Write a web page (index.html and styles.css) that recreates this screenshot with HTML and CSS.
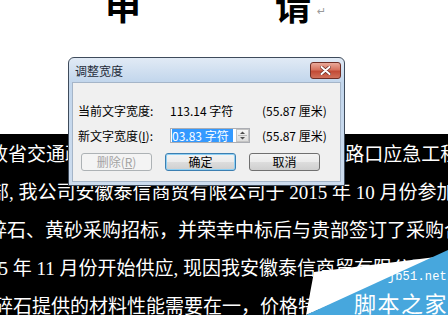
FILE: index.html
```html
<!DOCTYPE html>
<html lang="zh-CN">
<head>
    <meta charset="UTF-8">
    <title>调整宽度</title>
    <link rel="stylesheet" href="styles.css">
</head>
<body>
    <div class="doc-title">
        <span class="big">申</span>
        <span class="big">请</span>
        <span class="para-mark">↵</span>
    </div>

    <div class="selection">
        <div class="line l1">政省交通疏港道路建设管理处关于合肥312 路口应急工程建设</div>
        <div class="line l2">部, 我公司安徽泰信商贸有限公司于 2015 年 10 月份参加</div>
        <div class="line l3">碎石、黄砂采购招标，并荣幸中标后与贵部签订了采购合同</div>
        <div class="line l4">2015 年 11 月份开始供应, 现因我安徽泰信商贸有限公司</div>
        <div class="line l5">碎石提供的材料性能需要在一，价格特此申请调整</div>
    </div>

    <div class="dialog">
        <div class="titlebar">
            <span class="caption">调整宽度</span>
            <div class="close-btn">
                <svg width="11" height="9" viewBox="0 0 11 9">
                    <path d="M1.5 1 L9.5 8 M9.5 1 L1.5 8" stroke="#6b2a22" stroke-width="3.4" stroke-linecap="round"/>
                    <path d="M1.5 1 L9.5 8 M9.5 1 L1.5 8" stroke="#fff" stroke-width="2" stroke-linecap="round"/>
                </svg>
            </div>
        </div>
        <div class="panel">
            <div class="form-row">
                <span class="label">当前文字宽度:</span>
                <span class="value">113.14 字符</span>
                <span class="unit">(55.87 厘米)</span>
            </div>
            <div class="form-row">
                <span class="label">新文字宽度(<u>I</u>):</span>
                <span class="value">
                    <span class="spin-box">
                        <span class="hl">03.83 字符</span>
                        <span class="spinner">
                            <svg width="11" height="13" viewBox="0 0 11 13">
                                <path d="M3 5 L5.5 2.5 L8 5 Z" fill="#4d4d4d"/>
                                <path d="M1 6.5 H10" stroke="#b9b9b9" stroke-width="1"/>
                                <path d="M3 8 L5.5 10.5 L8 8 Z" fill="#4d4d4d"/>
                            </svg>
                        </span>
                    </span>
                </span>
                <span class="unit">(55.87 厘米)</span>
            </div>
            <div class="buttons">
                <button class="btn disabled">删除(<u>R</u>)</button>
                <button class="btn default">确定</button>
                <button class="btn">取消</button>
            </div>
        </div>
    </div>

    <div class="watermark">
        <svg class="wm-shape" width="148" height="70" viewBox="0 0 148 70">
            <polygon points="14,27 144,11 6,70" fill="#ffffff"/>
            <polygon points="6,70 148,5 148,70" fill="#47a7dd"/>
        </svg>
        <div class="wm-url">jb51.net</div>
        <div class="wm-name">脚本之家</div>
    </div>
</body>
</html>
```

FILE: styles.css
```css
body {
    margin: 0;
    width: 448px;
    height: 315px;
    overflow: hidden;
    position: relative;
    background-color: #fff;
    font-family: "Noto Sans CJK SC", sans-serif;
}

/* document behind the dialog */
.doc-title {
    height: 134px;
    display: flex;
    align-items: flex-start;
    padding-left: 105px;
    box-sizing: border-box;
}
.doc-title .big {
    font: 700 36px/36px "Noto Sans CJK SC", sans-serif;
    margin-top: -14px;
    color: #000;
}
.doc-title .big + .big {
    margin-left: 134px;
}
.para-mark {
    font: 11px/11px "DejaVu Sans", sans-serif;
    color: #9a9a9a;
    margin: 6px 0 0 6px;
}
.selection {
    background-color: #000;
    color: #fff;
    font: 19px/38px "Liberation Serif", "Noto Sans CJK SC", serif;
    padding-top: 2px;
    height: 181px;
}
.line {
    white-space: nowrap;
}
.l1 { margin-left: -11px; }
.l2 { margin-left: -10px; }
.l3 { margin-left: -12px; }
.l4 { margin-left: -30px; }
.l5 { margin-left: -6px; }

/* dialog window */
.dialog {
    position: absolute;
    left: 68px;
    top: 57px;
    width: 277px;
    height: 129px;
    box-sizing: border-box;
    border: 1px solid #3e4b5b;
    border-radius: 6px 6px 0 0;
    padding: 0 3px 3px;
    background: linear-gradient(#e1eaf5, #c2d6ec 24px, #cddcee);
    display: flex;
    flex-direction: column;
}
.titlebar {
    height: 24px;
    display: flex;
    align-items: center;
    justify-content: space-between;
    padding-left: 3px;
}
.caption {
    font-size: 12px;
    color: #1e2a38;
}
.close-btn {
    width: 31px;
    height: 17px;
    box-sizing: border-box;
    border: 1px solid #6e2e26;
    border-radius: 3px;
    background: linear-gradient(#e9a99a, #d6735f 45%, #c24a35 55%, #d0705a);
    display: flex;
    align-items: center;
    justify-content: center;
}
.panel {
    flex: 1;
    background-color: #f0f0f0;
    border: 1px solid #a5b5c8;
    padding: 20px 0 0 5px;
    font-size: 12px;
    color: #000;
}
.form-row {
    display: grid;
    grid-template-columns: 92px 92px auto;
    align-items: center;
    height: 15px;
    line-height: 14px;
    margin-bottom: 10px;
}
.value {
    display: flex;
}
.spin-box {
    display: flex;
    align-items: center;
    width: 80px;
    height: 15px;
    box-sizing: border-box;
    border: 1px solid #abadb3;
    background-color: #fff;
    padding-left: 1px;
}
.hl {
    background-color: #3399ff;
    color: #fff;
    line-height: 13px;
    width: 61px;
    white-space: nowrap;
}
.spinner {
    margin-left: auto;
    width: 13px;
    height: 13px;
    box-sizing: border-box;
    border: 1px solid #c3c3c3;
    background: linear-gradient(#f6f6f6, #dcdcdc);
    display: flex;
    align-items: center;
    justify-content: center;
}
.spinner svg {
    display: block;
}
.buttons {
    display: flex;
    gap: 13px;
    margin-top: 6px;
    padding-left: 3px;
}
.btn {
    width: 71px;
    height: 18px;
    padding: 0;
    font: 12px/14px "Noto Sans CJK SC", sans-serif;
    color: #000;
    border: 1px solid #707070;
    border-radius: 3px;
    background: linear-gradient(#f4f4f4, #ebebeb 50%, #dddddd 50%, #cfcfcf);
}
.btn.default {
    border-color: #3c7fb1;
    box-shadow: inset 0 0 0 1px #8fd0f4;
}
.btn.disabled {
    color: #a3a3a3;
    border-color: #adb2b5;
    background: #f4f4f4;
}

/* site watermark */
.watermark {
    position: absolute;
    right: 0;
    bottom: 0;
    width: 148px;
    height: 70px;
}
.wm-shape {
    display: block;
}
.wm-url {
    position: absolute;
    right: 1px;
    top: 25px;
    font: 12px/14px "Liberation Mono", monospace;
    letter-spacing: 0.2px;
    color: #fff;
}
.wm-name {
    position: absolute;
    right: 0;
    top: 45px;
    font: 22px/24px "Noto Sans CJK SC", sans-serif;
    letter-spacing: 1.5px;
    color: #fff;
}
```
